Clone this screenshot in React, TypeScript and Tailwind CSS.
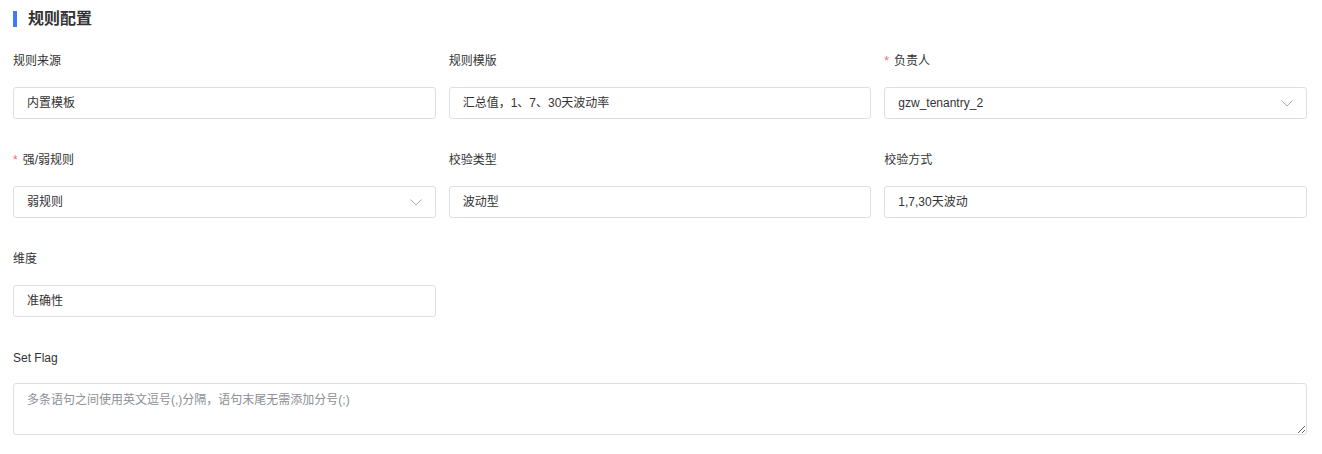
const font = { fontFamily: '"Liberation Sans", "Noto Sans CJK SC", sans-serif' };

type Field = {
  label: string;
  value: string;
  required?: boolean;
  select?: boolean;
};

const fields: Field[] = [
  { label: "规则来源", value: "内置模板" },
  { label: "规则模版", value: "汇总值，1、7、30天波动率" },
  { label: "负责人", value: "gzw_tenantry_2", required: true, select: true },
  { label: "强/弱规则", value: "弱规则", required: true, select: true },
  { label: "校验类型", value: "波动型" },
  { label: "校验方式", value: "1,7,30天波动" },
  { label: "维度", value: "准确性" },
];

function Chevron() {
  return (
    <svg width="12" height="7" viewBox="0 0 12 7" fill="none" className="shrink-0">
      <path d="M0.5 0.5L6 6L11.5 0.5" stroke="#a8abb2" strokeWidth="1" />
    </svg>
  );
}

function Label({ text, required }: { text: string; required?: boolean }) {
  return (
    <div className="flex h-5 items-center text-[12px] text-[#333]">
      {required && <span className="mr-[5px] text-[#f56c6c]">*</span>}
      {text}
    </div>
  );
}

export default function App() {
  return (
    <div className="min-h-[454px] bg-white pl-[13px] pr-[15px] pt-[7px]" style={font}>
      <div className="flex h-6 items-center">
        <span className="mr-[11px] h-[16px] w-[4px] bg-[#3e7bfa]" />
        <span className="text-[16px] font-bold text-[#333]">规则配置</span>
      </div>

      <div className="mt-[20px] grid grid-cols-3 gap-x-[13px] gap-y-[31px]">
        {fields.map((f) => (
          <div key={f.label}>
            <Label text={f.label} required={f.required} />
            <div className="mt-[16px] flex h-8 items-center justify-between rounded-[3px] border border-[#dcdfe6] pl-[13px] pr-[13px] text-[12px] text-[#333]">
              <span>{f.value}</span>
              {f.select && <Chevron />}
            </div>
          </div>
        ))}
        <div className="col-span-3">
          <Label text="Set Flag" />
          <textarea
            className="mt-[15px] block h-[52px] w-full resize-y rounded-[3px] border border-[#dcdfe6] px-[13px] py-[6px] text-[12px] leading-5 text-[#333] outline-none placeholder:text-[#8c8f96]"
            placeholder="多条语句之间使用英文逗号(,)分隔，语句末尾无需添加分号(;)"
            style={font}
          />
        </div>
      </div>
    </div>
  );
}
